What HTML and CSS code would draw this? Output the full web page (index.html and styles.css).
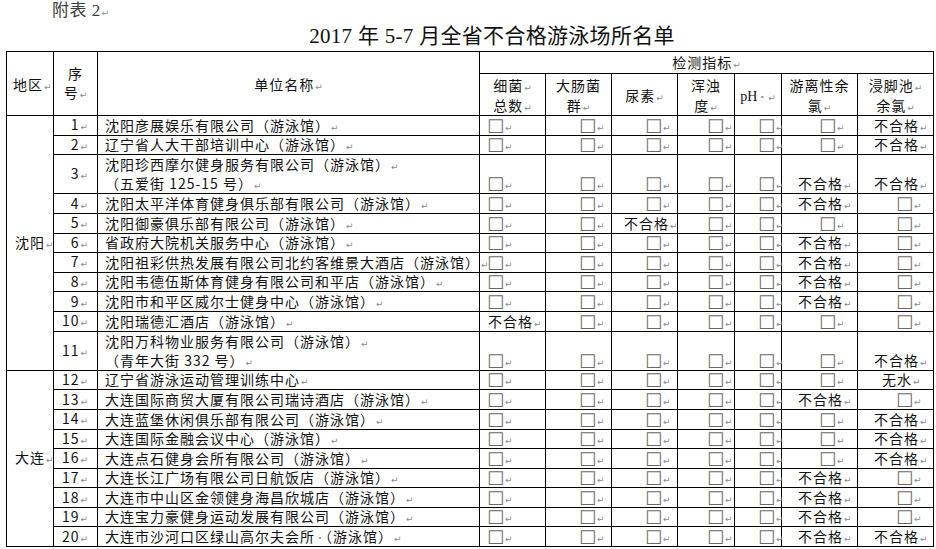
FILE: index.html
```html
<!DOCTYPE html>
<html lang="zh-CN">
<head>
<meta charset="utf-8">
<title>2017年5-7月全省不合格游泳场所名单</title>
<link rel="stylesheet" href="styles.css">
</head>
<body>
<div class="note">附表 2<span class="pm">↵</span></div>
<div class="title">2017 年 5-7 月全省不合格游泳场所名单</div>
<table class="sheet">
<colgroup>
<col class="w-area"><col class="w-no"><col class="w-name"><col class="w-i1"><col class="w-i2"><col class="w-i3"><col class="w-i4"><col class="w-i5"><col class="w-i6"><col class="w-i7">
</colgroup>
<thead>
<tr class="hr1">
<th rowspan="2" class="h-area">地区<span class="pm">↵</span></th>
<th rowspan="2" class="h-no">序<br>号<span class="pm">↵</span></th>
<th rowspan="2" class="h-name">单位名称<span class="pm">↵</span></th>
<th colspan="7" class="h-group">检测指标<span class="pm">↵</span></th>
</tr>
<tr class="hr2">
<th>细菌<span class="pm">↵</span><br>总数<span class="pm">↵</span></th>
<th>大肠菌<br>群<span class="pm">↵</span></th>
<th>尿素<span class="pm">↵</span></th>
<th>浑浊<br>度<span class="pm">↵</span></th>
<th><span class="ph">pH</span><span class="dot">·</span><span class="pm">↵</span></th>
<th>游离性余<br>氯<span class="pm">↵</span></th>
<th>浸脚池<span class="pm">↵</span><br>余氯<span class="pm">↵</span></th>
</tr>
</thead>
<tbody>
<tr class="r">
<td rowspan="11" class="area">沈阳<span class="pm">↵</span></td>
<td class="no">1<span class="pm">↵</span></td>
<td class="name">沈阳彦展娱乐有限公司（游泳馆）<span class="pm">↵</span></td>
<td class="c1"><span class="cb">□</span><span class="pm">↵</span></td>
<td class="c2"><span class="cb">□</span><span class="pm">↵</span></td>
<td class="c3"><span class="cb">□</span><span class="pm">↵</span></td>
<td class="c4"><span class="cb">□</span><span class="pm">↵</span></td>
<td class="c5"><span class="cb">□</span><span class="pm">↵</span></td>
<td class="c6"><span class="cb">□</span><span class="pm">↵</span></td>
<td class="c7 f">不合格<span class="pm">↵</span></td>
</tr>
<tr class="r">
<td class="no">2<span class="pm">↵</span></td>
<td class="name">辽宁省人大干部培训中心（游泳馆）<span class="pm">↵</span></td>
<td class="c1"><span class="cb">□</span><span class="pm">↵</span></td>
<td class="c2"><span class="cb">□</span><span class="pm">↵</span></td>
<td class="c3"><span class="cb">□</span><span class="pm">↵</span></td>
<td class="c4"><span class="cb">□</span><span class="pm">↵</span></td>
<td class="c5"><span class="cb">□</span><span class="pm">↵</span></td>
<td class="c6"><span class="cb">□</span><span class="pm">↵</span></td>
<td class="c7 f">不合格<span class="pm">↵</span></td>
</tr>
<tr class="r2">
<td class="no">3<span class="pm">↵</span></td>
<td class="name top">沈阳珍西摩尔健身服务有限公司（游泳馆）<span class="pm">↵</span><br>（五爱街 125-15 号）<span class="pm">↵</span></td>
<td class="c1"><span class="cb">□</span><span class="pm">↵</span></td>
<td class="c2"><span class="cb">□</span><span class="pm">↵</span></td>
<td class="c3"><span class="cb">□</span><span class="pm">↵</span></td>
<td class="c4"><span class="cb">□</span><span class="pm">↵</span></td>
<td class="c5"><span class="cb">□</span><span class="pm">↵</span></td>
<td class="c6 f">不合格<span class="pm">↵</span></td>
<td class="c7 f">不合格<span class="pm">↵</span></td>
</tr>
<tr class="r">
<td class="no">4<span class="pm">↵</span></td>
<td class="name">沈阳太平洋体育健身俱乐部有限公司（游泳馆）<span class="pm">↵</span></td>
<td class="c1"><span class="cb">□</span><span class="pm">↵</span></td>
<td class="c2"><span class="cb">□</span><span class="pm">↵</span></td>
<td class="c3"><span class="cb">□</span><span class="pm">↵</span></td>
<td class="c4"><span class="cb">□</span><span class="pm">↵</span></td>
<td class="c5"><span class="cb">□</span><span class="pm">↵</span></td>
<td class="c6 f">不合格<span class="pm">↵</span></td>
<td class="c7"><span class="cb">□</span><span class="pm">↵</span></td>
</tr>
<tr class="r">
<td class="no">5<span class="pm">↵</span></td>
<td class="name">沈阳御豪俱乐部有限公司（游泳馆）<span class="pm">↵</span></td>
<td class="c1"><span class="cb">□</span><span class="pm">↵</span></td>
<td class="c2"><span class="cb">□</span><span class="pm">↵</span></td>
<td class="c3 f">不合格<span class="pm">↵</span></td>
<td class="c4"><span class="cb">□</span><span class="pm">↵</span></td>
<td class="c5"><span class="cb">□</span><span class="pm">↵</span></td>
<td class="c6"><span class="cb">□</span><span class="pm">↵</span></td>
<td class="c7"><span class="cb">□</span><span class="pm">↵</span></td>
</tr>
<tr class="r">
<td class="no">6<span class="pm">↵</span></td>
<td class="name">省政府大院机关服务中心（游泳馆）<span class="pm">↵</span></td>
<td class="c1"><span class="cb">□</span><span class="pm">↵</span></td>
<td class="c2"><span class="cb">□</span><span class="pm">↵</span></td>
<td class="c3"><span class="cb">□</span><span class="pm">↵</span></td>
<td class="c4"><span class="cb">□</span><span class="pm">↵</span></td>
<td class="c5"><span class="cb">□</span><span class="pm">↵</span></td>
<td class="c6 f">不合格<span class="pm">↵</span></td>
<td class="c7"><span class="cb">□</span><span class="pm">↵</span></td>
</tr>
<tr class="r">
<td class="no">7<span class="pm">↵</span></td>
<td class="name">沈阳祖彩供热发展有限公司北约客维景大酒店（游泳馆）<span class="pm">↵</span></td>
<td class="c1"><span class="cb">□</span><span class="pm">↵</span></td>
<td class="c2"><span class="cb">□</span><span class="pm">↵</span></td>
<td class="c3"><span class="cb">□</span><span class="pm">↵</span></td>
<td class="c4"><span class="cb">□</span><span class="pm">↵</span></td>
<td class="c5"><span class="cb">□</span><span class="pm">↵</span></td>
<td class="c6 f">不合格<span class="pm">↵</span></td>
<td class="c7"><span class="cb">□</span><span class="pm">↵</span></td>
</tr>
<tr class="r">
<td class="no">8<span class="pm">↵</span></td>
<td class="name">沈阳韦德伍斯体育健身有限公司和平店（游泳馆）<span class="pm">↵</span></td>
<td class="c1"><span class="cb">□</span><span class="pm">↵</span></td>
<td class="c2"><span class="cb">□</span><span class="pm">↵</span></td>
<td class="c3"><span class="cb">□</span><span class="pm">↵</span></td>
<td class="c4"><span class="cb">□</span><span class="pm">↵</span></td>
<td class="c5"><span class="cb">□</span><span class="pm">↵</span></td>
<td class="c6 f">不合格<span class="pm">↵</span></td>
<td class="c7"><span class="cb">□</span><span class="pm">↵</span></td>
</tr>
<tr class="r">
<td class="no">9<span class="pm">↵</span></td>
<td class="name">沈阳市和平区威尔士健身中心（游泳馆）<span class="pm">↵</span></td>
<td class="c1"><span class="cb">□</span><span class="pm">↵</span></td>
<td class="c2"><span class="cb">□</span><span class="pm">↵</span></td>
<td class="c3"><span class="cb">□</span><span class="pm">↵</span></td>
<td class="c4"><span class="cb">□</span><span class="pm">↵</span></td>
<td class="c5"><span class="cb">□</span><span class="pm">↵</span></td>
<td class="c6 f">不合格<span class="pm">↵</span></td>
<td class="c7"><span class="cb">□</span><span class="pm">↵</span></td>
</tr>
<tr class="r">
<td class="no">10<span class="pm">↵</span></td>
<td class="name">沈阳瑞德汇酒店（游泳馆）<span class="pm">↵</span></td>
<td class="c1 f">不合格<span class="pm">↵</span></td>
<td class="c2"><span class="cb">□</span><span class="pm">↵</span></td>
<td class="c3"><span class="cb">□</span><span class="pm">↵</span></td>
<td class="c4"><span class="cb">□</span><span class="pm">↵</span></td>
<td class="c5"><span class="cb">□</span><span class="pm">↵</span></td>
<td class="c6"><span class="cb">□</span><span class="pm">↵</span></td>
<td class="c7"><span class="cb">□</span><span class="pm">↵</span></td>
</tr>
<tr class="r2">
<td class="no">11<span class="pm">↵</span></td>
<td class="name top">沈阳万科物业服务有限公司（游泳馆）<span class="pm">↵</span><br>（青年大街 332 号）<span class="pm">↵</span></td>
<td class="c1"><span class="cb">□</span><span class="pm">↵</span></td>
<td class="c2"><span class="cb">□</span><span class="pm">↵</span></td>
<td class="c3"><span class="cb">□</span><span class="pm">↵</span></td>
<td class="c4"><span class="cb">□</span><span class="pm">↵</span></td>
<td class="c5"><span class="cb">□</span><span class="pm">↵</span></td>
<td class="c6"><span class="cb">□</span><span class="pm">↵</span></td>
<td class="c7 f">不合格<span class="pm">↵</span></td>
</tr>
<tr class="r">
<td rowspan="9" class="area">大连<span class="pm">↵</span></td>
<td class="no">12<span class="pm">↵</span></td>
<td class="name">辽宁省游泳运动管理训练中心<span class="pm">↵</span></td>
<td class="c1"><span class="cb">□</span><span class="pm">↵</span></td>
<td class="c2"><span class="cb">□</span><span class="pm">↵</span></td>
<td class="c3"><span class="cb">□</span><span class="pm">↵</span></td>
<td class="c4"><span class="cb">□</span><span class="pm">↵</span></td>
<td class="c5"><span class="cb">□</span><span class="pm">↵</span></td>
<td class="c6"><span class="cb">□</span><span class="pm">↵</span></td>
<td class="c7 nw">无水<span class="pm">↵</span></td>
</tr>
<tr class="r">
<td class="no">13<span class="pm">↵</span></td>
<td class="name">大连国际商贸大厦有限公司瑞诗酒店（游泳馆）<span class="pm">↵</span></td>
<td class="c1"><span class="cb">□</span><span class="pm">↵</span></td>
<td class="c2"><span class="cb">□</span><span class="pm">↵</span></td>
<td class="c3"><span class="cb">□</span><span class="pm">↵</span></td>
<td class="c4"><span class="cb">□</span><span class="pm">↵</span></td>
<td class="c5"><span class="cb">□</span><span class="pm">↵</span></td>
<td class="c6 f">不合格<span class="pm">↵</span></td>
<td class="c7"><span class="cb">□</span><span class="pm">↵</span></td>
</tr>
<tr class="r">
<td class="no">14<span class="pm">↵</span></td>
<td class="name">大连蓝堡休闲俱乐部有限公司（游泳馆）<span class="pm">↵</span></td>
<td class="c1"><span class="cb">□</span><span class="pm">↵</span></td>
<td class="c2"><span class="cb">□</span><span class="pm">↵</span></td>
<td class="c3"><span class="cb">□</span><span class="pm">↵</span></td>
<td class="c4"><span class="cb">□</span><span class="pm">↵</span></td>
<td class="c5"><span class="cb">□</span><span class="pm">↵</span></td>
<td class="c6"><span class="cb">□</span><span class="pm">↵</span></td>
<td class="c7 f">不合格<span class="pm">↵</span></td>
</tr>
<tr class="r">
<td class="no">15<span class="pm">↵</span></td>
<td class="name">大连国际金融会议中心（游泳馆）<span class="pm">↵</span></td>
<td class="c1"><span class="cb">□</span><span class="pm">↵</span></td>
<td class="c2"><span class="cb">□</span><span class="pm">↵</span></td>
<td class="c3"><span class="cb">□</span><span class="pm">↵</span></td>
<td class="c4"><span class="cb">□</span><span class="pm">↵</span></td>
<td class="c5"><span class="cb">□</span><span class="pm">↵</span></td>
<td class="c6"><span class="cb">□</span><span class="pm">↵</span></td>
<td class="c7 f">不合格<span class="pm">↵</span></td>
</tr>
<tr class="r">
<td class="no">16<span class="pm">↵</span></td>
<td class="name">大连点石健身会所有限公司（游泳馆）<span class="pm">↵</span></td>
<td class="c1"><span class="cb">□</span><span class="pm">↵</span></td>
<td class="c2"><span class="cb">□</span><span class="pm">↵</span></td>
<td class="c3"><span class="cb">□</span><span class="pm">↵</span></td>
<td class="c4"><span class="cb">□</span><span class="pm">↵</span></td>
<td class="c5"><span class="cb">□</span><span class="pm">↵</span></td>
<td class="c6"><span class="cb">□</span><span class="pm">↵</span></td>
<td class="c7 f">不合格<span class="pm">↵</span></td>
</tr>
<tr class="r">
<td class="no">17<span class="pm">↵</span></td>
<td class="name">大连长江广场有限公司日航饭店（游泳馆）<span class="pm">↵</span></td>
<td class="c1"><span class="cb">□</span><span class="pm">↵</span></td>
<td class="c2"><span class="cb">□</span><span class="pm">↵</span></td>
<td class="c3"><span class="cb">□</span><span class="pm">↵</span></td>
<td class="c4"><span class="cb">□</span><span class="pm">↵</span></td>
<td class="c5"><span class="cb">□</span><span class="pm">↵</span></td>
<td class="c6 f">不合格<span class="pm">↵</span></td>
<td class="c7"><span class="cb">□</span><span class="pm">↵</span></td>
</tr>
<tr class="r">
<td class="no">18<span class="pm">↵</span></td>
<td class="name">大连市中山区金领健身海昌欣城店（游泳馆）<span class="pm">↵</span></td>
<td class="c1"><span class="cb">□</span><span class="pm">↵</span></td>
<td class="c2"><span class="cb">□</span><span class="pm">↵</span></td>
<td class="c3"><span class="cb">□</span><span class="pm">↵</span></td>
<td class="c4"><span class="cb">□</span><span class="pm">↵</span></td>
<td class="c5"><span class="cb">□</span><span class="pm">↵</span></td>
<td class="c6 f">不合格<span class="pm">↵</span></td>
<td class="c7"><span class="cb">□</span><span class="pm">↵</span></td>
</tr>
<tr class="r">
<td class="no">19<span class="pm">↵</span></td>
<td class="name">大连宝力豪健身运动发展有限公司（游泳馆）<span class="pm">↵</span></td>
<td class="c1"><span class="cb">□</span><span class="pm">↵</span></td>
<td class="c2"><span class="cb">□</span><span class="pm">↵</span></td>
<td class="c3"><span class="cb">□</span><span class="pm">↵</span></td>
<td class="c4"><span class="cb">□</span><span class="pm">↵</span></td>
<td class="c5"><span class="cb">□</span><span class="pm">↵</span></td>
<td class="c6 f">不合格<span class="pm">↵</span></td>
<td class="c7"><span class="cb">□</span><span class="pm">↵</span></td>
</tr>
<tr class="r">
<td class="no">20<span class="pm">↵</span></td>
<td class="name">大连市沙河口区绿山高尔夫会所<span class="dot">·</span>（游泳馆）<span class="pm">↵</span></td>
<td class="c1"><span class="cb">□</span><span class="pm">↵</span></td>
<td class="c2"><span class="cb">□</span><span class="pm">↵</span></td>
<td class="c3"><span class="cb">□</span><span class="pm">↵</span></td>
<td class="c4"><span class="cb">□</span><span class="pm">↵</span></td>
<td class="c5"><span class="cb">□</span><span class="pm">↵</span></td>
<td class="c6 f">不合格<span class="pm">↵</span></td>
<td class="c7 f">不合格<span class="pm">↵</span></td>
</tr>
</tbody>
</table>
</body>
</html>
```
FILE: styles.css
```css
html, body {
  margin: 0;
  padding: 0;
  background: #fff;
}
body {
  color: #000;
  font-family: "Noto Sans CJK SC", sans-serif;
}
.note {
  height: 23px;
  padding-left: 52px;
  font-family: "Liberation Serif", "Noto Sans CJK SC", serif;
  font-size: 17px;
  line-height: 21px;
  color: #3c3c3c;
  letter-spacing: 0.5px;
}
.title {
  height: 28px;
  padding-left: 48px;
  text-align: center;
  font-family: "Liberation Serif", "Noto Sans CJK SC", serif;
  font-size: 21px;
  line-height: 26px;
  letter-spacing: 0.3px;
  color: #111;
}
.sheet {
  margin-left: 6px;
  width: 928px;
  border-collapse: collapse;
  table-layout: fixed;
  font-size: 14px;
  line-height: 16px;
  letter-spacing: 1px;
  color: #111;
}
.sheet th, .sheet td {
  border: 1px solid #000;
  padding: 0;
  font-weight: normal;
  white-space: nowrap;
}
.w-area { width: 47px; }
.w-no { width: 44px; }
.w-name { width: 382px; }
.w-i1, .w-i2, .w-i3 { width: 66px; }
.w-i4 { width: 57px; }
.w-i5 { width: 47px; }
.w-i6, .w-i7 { width: 76px; }

.hr1 { height: 22px; }
.hr2 { height: 42px; }
.sheet thead th { text-align: center; vertical-align: middle; line-height: 20px; }
.sheet thead th.h-area { text-align: left; padding-left: 6px; }
.sheet thead th.h-no { line-height: 19px; padding-bottom: 2px; }
.sheet thead th.h-group { line-height: 19px; }

.r { height: 19.6px; }
.r2 { height: 39.2px; }
.sheet td { vertical-align: bottom; text-align: left; padding-bottom: 2px; }
.sheet td.area { vertical-align: middle; padding-left: 8px; }
.sheet td.no { vertical-align: middle; text-align: right; padding-right: 9px; }
.sheet td.name { padding-left: 7px; }
.sheet td.name.top { vertical-align: top; line-height: 19px; padding-top: 0; padding-bottom: 0; }

.sheet td.c1 { padding-left: 7px; }
.sheet td.c2 { padding-left: 33px; }
.sheet td.c3 { padding-left: 33px; }
.sheet td.c4 { padding-left: 29px; }
.sheet td.c5 { padding-left: 23px; }
.sheet td.c6 { padding-left: 37px; }
.sheet td.c7 { padding-left: 38px; }
.sheet td.c1.f { padding-left: 8px; }
.sheet td.c3.f { padding-left: 12px; }
.sheet td.c6.f { padding-left: 16px; }
.sheet td.c7.f { padding-left: 16px; }
.sheet td.c7.nw { padding-left: 24px; }

.cb {
  font-family: "DejaVu Sans", sans-serif;
  font-size: 18px;
  line-height: 0;
  color: #6a6a6a;
  letter-spacing: 0;
}
.pm {
  font-family: "DejaVu Sans", sans-serif;
  font-size: 9px;
  line-height: 0;
  color: #8c8c8c;
  letter-spacing: 0;
  margin-left: 1px;
}
.dot {
  color: #8c8c8c;
  font-size: 10px;
  line-height: 0;
  letter-spacing: 0;
}
.ph {
  font-family: "Liberation Serif", serif;
  line-height: 0;
  letter-spacing: 0;
}
```
